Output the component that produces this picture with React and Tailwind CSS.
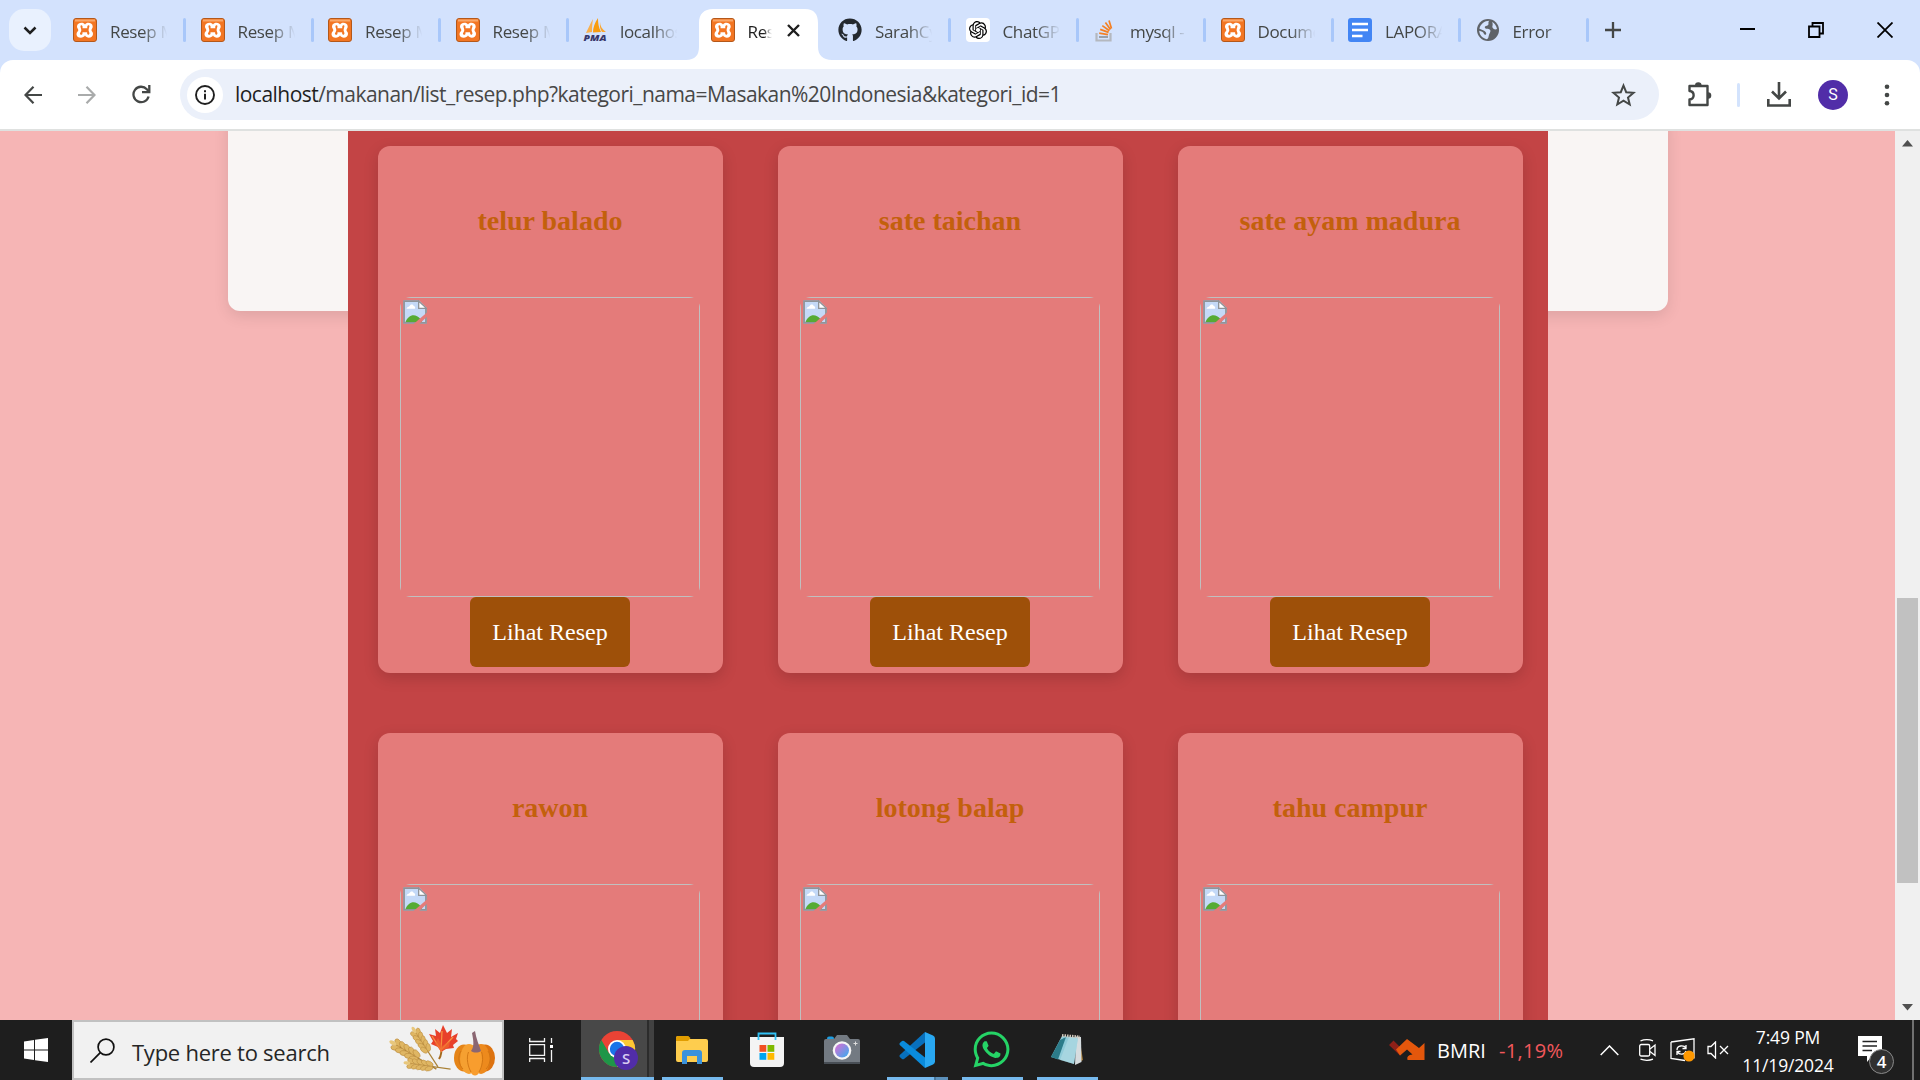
import React from "react";
import { FaGithub, FaWhatsapp } from "react-icons/fa";
import { SiOpenai } from "react-icons/si";

const XamppIcon = () => (
  <svg width="24" height="24" viewBox="0 0 24 24">
    <rect x="0.5" y="0.5" width="23" height="23" rx="2.5" fill="#f37623" stroke="#b4581a" />
    <rect x="2" y="1.5" width="20" height="2" fill="#f9a86a" />
    <path
      d="M12 6.400C10.500 3.800 4 4.200 4 8.600C4 10.600 5.300 11 5.300 12.200C5.300 13.400 3.500 13.800 3.500 16.200C3.500 20.400 10.200 20.800 12 17.600C13.800 20.800 20 20.200 20 16C20 13.600 18.500 13.400 18.500 12.200C18.500 11 19.700 10.600 19.700 8.600C19.700 4.200 13.500 3.800 12 6.400Z"
      fill="#fff"
    />
    <path
      d="M8.200 7.200C9.600 7.200 9.800 8.600 9.500 10.200H14.300C14 8.400 14.500 7 15.700 7.200C17.300 7.600 15.800 9.600 15.600 12C15.600 13.800 17.400 15.400 15.900 16.500C14.600 17.200 14 16 14.100 14.200H9.500C9.800 16.200 8.800 17.200 7.500 16.600C6 15.600 8.300 13.800 8.300 12.200C8.300 10 6.500 8 8.200 7.200Z"
      fill="#f37623"
    />
  </svg>
);

const PmaIcon = () => (
  <svg width="25" height="24" viewBox="0 0 25 24">
    <path d="M10 1C7 6 5 11 3 15L9 14C9 9 9.300 5 10 1Z" fill="#f9b04c" />
    <path d="M15 0C11.500 5 10 10 10 14.500L18 14C15.500 9 15 5 15 0Z" fill="#f89c0e" />
    <path d="M17 4C17 8 19 11 23 14L19 14C17 11 16.600 8 17 4Z" fill="#f9a630" />
    <text x="0.500" y="23" textLength="23" lengthAdjust="spacingAndGlyphs" fontSize="9.500" fontWeight="800" fontStyle="italic" fontFamily="Open Sans, sans-serif" fill="#38386a">PMA</text>
  </svg>
);

const StackIcon = () => (
  <svg width="24" height="24" viewBox="0 0 24 24" fill="none">
    <path d="M3.500 15V22.500H17.500V15" stroke="#b4b8bf" strokeWidth="2.200" />
    <path d="M6 19H15" stroke="#9aa0a8" strokeWidth="2" />
    <path d="M6.200 15.200L15 16.600M7.200 11.400L15.600 14.400M9.300 7.600L16.400 12.700M12.400 4.500L17.500 11.500M16 2.500L18.500 10.500" stroke="#f48024" strokeWidth="1.700" />
  </svg>
);

const DocsIcon = () => (
  <svg width="24" height="24" viewBox="0 0 24 24">
    <rect width="24" height="24" rx="3" fill="#4285f4" />
    <path d="M4 6H20M4 12H20M4 18H14.500" stroke="#fff" strokeWidth="2.700" />
  </svg>
);

const GlobeIcon = () => (
  <svg width="24" height="24" viewBox="0 0 24 24">
    <circle cx="12" cy="12" r="11" fill="#5f6368" />
    <path d="M13 2.500C11 4 13 5.500 11.500 7C10 8 8 7.500 8.500 9.500C9 11 12 10 13.500 11.500C15 13 13 15 12.500 17C12 19 12 20 10.500 21C6 20 3 16.500 2.800 12.500C5 13 7 13.500 7.500 15.500C8 17 10 17 9.800 15C9.600 13 6.500 12 3 10.500C4 6 8 2.500 13 2.500Z" fill="#d3e2fd" transform="translate(.4 .3)" />
    <path d="M16 4C18.500 5 20.500 8 21 11C19.500 12 17.500 11.500 16.500 9.500C16 8 17.500 6.500 16 4Z" fill="#d3e2fd" />
  </svg>
);

const GptIcon = () => (
  <span className="flex h-6 w-6 items-center justify-center rounded bg-white text-black">
    <SiOpenai size={18} />
  </span>
);

const tabs = [
  { icon: <XamppIcon />, label: "Resep M", sep: true },
  { icon: <XamppIcon />, label: "Resep M", sep: true },
  { icon: <XamppIcon />, label: "Resep M", sep: true },
  { icon: <XamppIcon />, label: "Resep M", sep: true },
  { icon: <PmaIcon />, label: "localhos", sep: false },
  { icon: <XamppIcon />, label: "Resep", active: true },
  { icon: <FaGithub size={24} color="#24292f" />, label: "SarahCy", sep: true },
  { icon: <GptIcon />, label: "ChatGPT", sep: true },
  { icon: <StackIcon />, label: "mysql - ", sep: true },
  { icon: <XamppIcon />, label: "Docume", sep: true },
  { icon: <DocsIcon />, label: "LAPORA", sep: true },
  { icon: <GlobeIcon />, label: "Error", sep: true },
];

const fadeLong = "w-[59px] [mask-image:linear-gradient(to_right,black_55%,transparent_97%)]";
const fadeShort = "w-[24px] [mask-image:linear-gradient(to_right,black_65%,transparent_100%)]";

function Tab({ tab }) {
  return (
    <div className="relative flex h-[60px] w-[127.5px] shrink-0 items-center">
      {tab.active && (
        <svg className="absolute top-[9px] -left-[25px]" width="146" height="51" viewBox="0 0 146 51">
          <path d="M0 51C9 51 13 46 13 38V14C13 5 18 0 27 0H119C128 0 132 5 132 14V38C132 46 137 51 146 51Z" fill="#fff" />
        </svg>
      )}
      <span className="relative flex w-[37px] shrink-0">{tab.icon}</span>
      <span className={`relative mt-[3px] overflow-hidden text-[17px] tracking-[-0.35px] whitespace-pre ${tab.active ? "text-[#1f1f1f]" : "text-[#444746]"} ${tab.active ? fadeShort : fadeLong}`}>
        {tab.label}
      </span>
      {tab.active && (
        <svg className="relative ml-[15px]" width="13" height="13" viewBox="0 0 13 13">
          <path d="M1 1L12 12M12 1L1 12" stroke="#1f1f1f" strokeWidth="2.400" />
        </svg>
      )}
      {tab.sep && <span className="ml-[14px] h-6 w-[3px] rounded-full bg-[#a8c7fa]" />}
    </div>
  );
}

function TabStrip() {
  return (
    <div className="flex h-[60px] items-center bg-[#d3e2fd] pl-[9px]">
      <div className="mr-[22px] flex h-[42px] w-[42px] shrink-0 items-center justify-center rounded-[15px] bg-[#e9f1fe]">
        <svg width="14" height="9" viewBox="0 0 14 9" fill="none">
          <path d="M1.500 1.500L7 7L12.500 1.500" stroke="#1f1f1f" strokeWidth="2.500" />
        </svg>
      </div>
      {tabs.map((t, i) => (
        <Tab key={i} tab={t} />
      ))}
      <svg className="ml-[2px] shrink-0" width="16" height="16" viewBox="0 0 16 16">
        <path d="M8 0V16M0 8H16" stroke="#444746" strokeWidth="2.300" />
      </svg>
      <div className="ml-auto flex items-center gap-[53px] pr-[27px]">
        <svg width="16" height="16" viewBox="0 0 16 16"><path d="M1 7H16" stroke="#000" strokeWidth="2" /></svg>
        <svg width="16" height="16" viewBox="0 0 16 16" fill="none" stroke="#000" strokeWidth="1.800">
          <path d="M1 4.500H11.500V15H1ZM4.500 4.500V1H15V11.500H11.500" />
        </svg>
        <svg width="16" height="16" viewBox="0 0 16 16"><path d="M0.500 0.500L15.500 15.500M15.500 0.500L0.500 15.500" stroke="#000" strokeWidth="1.800" /></svg>
      </div>
    </div>
  );
}

function Toolbar() {
  return (
    <div className="bg-[#d3e2fd]">
      <div className="flex h-[69px] items-center rounded-t-[13px] bg-white pl-6">
        <svg className="mr-9" width="18" height="18" viewBox="0 0 18 18" fill="none" stroke="#444746" strokeWidth="2.200">
          <path d="M18 9H1.500M9.500 0.800L1.500 9L9.500 17.200" />
        </svg>
        <svg className="mr-9" width="18" height="18" viewBox="0 0 18 18" fill="none" stroke="#a9abab" strokeWidth="2.200">
          <path d="M0 9H16.500M8.500 0.800L16.500 9L8.500 17.200" />
        </svg>
        <svg className="mr-[29px]" width="19" height="19" viewBox="0 0 19 19" fill="none" stroke="#444746" strokeWidth="2.300">
          <path d="M16.600 11.500A7.700 7.700 0 1 1 14.800 4.200L17 6.500" />
          <path d="M17.300 0V7.200H10" />
        </svg>
        <div className="flex h-[51px] w-[1479px] items-center rounded-full bg-[#ebf0fa] pr-[23px] pl-[7px]">
          <div className="flex h-9 w-9 items-center justify-center rounded-full bg-white">
            <svg width="20" height="20" viewBox="0 0 20 20" fill="none">
              <circle cx="10" cy="10" r="9" stroke="#1f1f1f" strokeWidth="1.900" />
              <path d="M10 8.700V14.500M10 5.200V7.200" stroke="#1f1f1f" strokeWidth="2" />
            </svg>
          </div>
          <span className="ml-[12px] text-[21px] tracking-[-0.53px] text-[#474747]">
            <span className="text-[#1f1f1f]">localhost</span>/makanan/list_resep.php?kategori_nama=Masakan%20Indonesia&amp;kategori_id=1
          </span>
          <svg className="ml-auto" width="25" height="24" viewBox="0 0 25 24" fill="none">
            <path d="M12.500 2.500L15.200 9.200L22.600 9.800L17 14.500L18.700 21.500L12.500 17.700L6.300 21.500L8 14.500L2.400 9.800L9.800 9.200Z" stroke="#444746" strokeWidth="2" />
          </svg>
        </div>
        <svg className="ml-[27px]" width="26" height="27" viewBox="0 0 26 27" fill="none">
          <path d="M3.500 5H21.500V24H3.500V18.500C9 18 9 10.500 3.500 10Z" stroke="#444746" strokeWidth="2.400" strokeLinejoin="round" />
          <path d="M9 4.500A3.300 3.300 0 0 1 15.600 4.500ZM22 11.200A3.300 3.300 0 0 1 22 17.800Z" fill="#444746" />
        </svg>
        <span className="ml-[25px] h-6 w-[3px] rounded-full bg-[#d3e3fd]" />
        <svg className="ml-[27px]" width="24" height="25" viewBox="0 0 24 25" fill="none" stroke="#444746" strokeWidth="2.600">
          <path d="M12 0V16M5 9.500L12 16.500L19 9.500M1.300 17V23.500H22.700V17" />
        </svg>
        <span className="ml-[27px] flex h-[30px] w-[30px] items-center justify-center rounded-full bg-[#512da8] font-[Roboto,sans-serif] text-[16px] text-white">S</span>
        <svg className="ml-9" width="6" height="22" viewBox="0 0 6 22" fill="#444746">
          <circle cx="3" cy="2.700" r="2.300" /><circle cx="3" cy="11" r="2.300" /><circle cx="3" cy="19.300" r="2.300" />
        </svg>
      </div>
      <div className="h-[2px] bg-[#dfe1e0]" />
    </div>
  );
}

const BrokenImage = () => (
  <svg className="mt-[2px] ml-[2px]" width="24" height="24" viewBox="0 0 23 23">
    <path d="M0.500 0.500H15.500L22.500 7.500V22.500H0.500Z" fill="#c4d9f7" />
    <path d="M3.500 8.500C3.500 6.500 6 6.500 6.500 5.500C7.500 3.500 10 4 10.300 5.800C12 6 12 8.500 11 8.500Z" fill="#fff" />
    <path d="M2 22C5 13.500 12 12.500 16.500 18L19 22Z" fill="#56ab34" />
    <path d="M15 1V8H22.500Z" fill="#fff" stroke="#8f9499" strokeWidth="1.300" />
    <path d="M15.500 1H1V22H22V8" fill="none" stroke="#8f9499" strokeWidth="1.700" />
    <path d="M9.500 23.500L23.500 11.500V15.500L15 23.500Z" fill="#e47b7a" />
  </svg>
);

const recipes = ["telur balado", "sate taichan", "sate ayam madura", "rawon", "lotong balap", "tahu campur"];

function RecipeCard({ name }) {
  return (
    <article className="flex h-[527px] w-[345px] flex-col items-center rounded-[12px] bg-[#e47b7a] pr-[1px] shadow-[0_5px_15px_rgba(0,0,0,0.15)]">
      <h3 className="flex h-[151px] items-center pb-[2px] font-['Liberation_Serif',serif] text-[28px] leading-none font-bold text-[#c3600c]">{name}</h3>
      <div className="h-[300px] w-[300px] shrink-0 overflow-hidden rounded-[11px]">
        <div className="h-full w-full border border-[#c0c0c0]"><BrokenImage /></div>
      </div>
      <a className="flex h-[70px] w-[160px] shrink-0 items-center justify-center rounded-[6px] bg-[#9e5009] font-['Liberation_Serif',serif] text-[24px] text-white">
        Lihat Resep
      </a>
    </article>
  );
}

function Page() {
  return (
    <div className="flex h-[889px] overflow-hidden">
      <main className="relative h-full w-[1895px] overflow-hidden bg-[#f6b5b5] pl-[348px]">
        <div className="absolute -top-5 left-[228px] h-[200px] w-[1440px] rounded-[12px] bg-[#f9f5f4] shadow-[0_5px_15px_rgba(0,0,0,0.1)]" />
        <section className="relative grid h-[1200px] w-[1200px] grid-cols-[repeat(3,345px)] content-start gap-x-[55px] gap-y-[60px] bg-[#c34445] pt-[15px] pl-[30px]">
          {recipes.map((r) => (
            <RecipeCard key={r} name={r} />
          ))}
        </section>
      </main>
      <div className="flex h-full w-[25px] flex-col items-center bg-[#f0f0f0] py-[9px]">
        <svg className="shrink-0" width="11" height="7" viewBox="0 0 11 7"><path d="M5.500 0L11 6.500H0Z" fill="#505050" /></svg>
        <div className="mt-[451px] h-[285px] w-[21px] shrink-0 bg-[#c1c1c1]" />
        <svg className="mt-auto shrink-0" width="11" height="7" viewBox="0 0 11 7"><path d="M5.500 6.500L11 0H0Z" fill="#505050" /></svg>
      </div>
    </div>
  );
}

const grains = [0, 1, 2, 3, 4];
const WheatEar = ({ transform }) => (
  <g transform={transform}>
    <path d="M0 0L44 0" stroke="#a98136" strokeWidth="1.200" />
    {grains.map((g) => (
      <g key={g} fill="#dfb663" stroke="#b98a3c" strokeWidth="0.500">
        <ellipse cx={4 + g * 4.6} cy="-2.500" rx="4" ry="2.200" transform={`rotate(24 ${4 + g * 4.6} -2.500)`} />
        <ellipse cx={4 + g * 4.6} cy="2.500" rx="4" ry="2.200" transform={`rotate(-24 ${4 + g * 4.6} 2.500)`} />
      </g>
    ))}
    <ellipse cx="0" cy="0" rx="3.500" ry="1.700" fill="#e8c77c" />
  </g>
);

const HarvestArt = () => (
  <svg width="108" height="52" viewBox="0 0 108 52">
    <WheatEar transform="translate(25 6) rotate(57)" />
    <WheatEar transform="translate(4 19) rotate(31) scale(1.150)" />
    <WheatEar transform="translate(18 39) rotate(8)" />
    <path d="M52 22C53 28 52 32 50 35" stroke="#a4691d" strokeWidth="2" fill="none" />
    <path d="M54 1L58 9L63 5L62 13L69 9L67 15L69 17L64 21L65 24L57 25L52 28L49 23L42 20L44 17L40 10L47 12L46 5L51 9Z" fill="#e8402a" />
    <path d="M52 28L53 7M52 26L64 13M52 26L43 12" stroke="#f79040" strokeWidth="1.300" />
    <path d="M52 27L46 20L49 14L53 22L61 17L60 23Z" fill="#f06a2d" opacity="0.700" />
    <ellipse cx="75" cy="34" rx="10" ry="13.500" fill="#e58417" />
    <ellipse cx="96" cy="34" rx="10" ry="13.500" fill="#dd7310" />
    <ellipse cx="80" cy="35" rx="9" ry="15" fill="#f5a031" />
    <ellipse cx="92" cy="35" rx="9" ry="15" fill="#ed8a1d" />
    <ellipse cx="86" cy="36" rx="7" ry="15.500" fill="#f89d2e" />
    <path d="M79.500 28C77 34 79 43 82 48M92.500 28C95 34 93 43 90 48M72 27C68 33 70 41 74 45M99 27C103 33 101 41 97 45" stroke="#cf7412" strokeWidth="0.900" fill="none" />
    <path d="M82 27C86 22 84 15 83 9L86 7C87 14 90 21 92 27C89 29 85 29 82 27Z" fill="#8a6672" />
  </svg>
);

const ChromeIcon = () => (
  <svg width="40" height="40" viewBox="0 0 40 40">
    <circle cx="18" cy="18" r="18" fill="#ea4335" />
    <path d="M2.400 9A18 18 0 0 0 18 36L25.800 22.500L18 18L10.200 22.500Z" fill="#1e9648" />
    <path d="M33.600 9A18 18 0 0 1 18 36L25.800 22.500L18 9Z" fill="#fcc934" />
    <circle cx="18" cy="18" r="9" fill="#fff" />
    <circle cx="18" cy="18" r="7.200" fill="#1a73e8" />
    <circle cx="27" cy="27" r="12" fill="#512da8" />
    <text x="27" y="32.500" textAnchor="middle" fontSize="15" fontWeight="600" fontFamily="Open Sans, sans-serif" fill="#d9cdf2">S</text>
  </svg>
);

const ExplorerIcon = () => (
  <svg width="32" height="32" viewBox="0 0 32 32">
    <path d="M0 4Q0 2 2 2H12L14 5H30Q32 5 32 7V26Q32 28 30 28H2Q0 28 0 26Z" fill="#fecd4e" />
    <path d="M0 7V4Q0 2 2 2H12L14.500 4L12 7Z" fill="#e19d00" />
    <path d="M6 30V19Q6 16 9 16H23Q26 16 26 19V30H21V22H11V30Z" fill="#3a92dc" />
  </svg>
);

const StoreIcon = () => (
  <svg width="36" height="36" viewBox="0 0 36 36" fill="none">
    <path d="M1 5H35V31Q35 35 31 35H5Q1 35 1 31Z" fill="#f4f4f4" />
    <path d="M9.500 8V1.500H26.500V8" stroke="#31c1f5" strokeWidth="1.800" />
    <path d="M10.500 13H17.300V19.800H10.500Z" fill="#f25022" /><path d="M18.500 13H25.300V19.800H18.500Z" fill="#7fba00" />
    <path d="M10.500 21H17.300V27.800H10.500Z" fill="#00a4ef" /><path d="M18.500 21H25.300V27.800H18.500Z" fill="#ffb900" />
  </svg>
);

const CameraIcon = () => (
  <svg width="36" height="36" viewBox="0 0 36 36">
    <defs>
      <linearGradient id="lens" x1="0" y1="0" x2="1" y2="1"><stop offset="0.200" stopColor="#c078d8" /><stop offset="1" stopColor="#32aef0" /></linearGradient>
    </defs>
    <rect x="3" y="4.500" width="7" height="5" rx="2" fill="#1e9de0" />
    <path d="M0 9Q0 7 2 7H10L13 3H23L26 7H34Q36 7 36 9V32H0Z" fill="#737a82" />
    <path d="M0 30H36V32H0Z" fill="#484e55" />
    <circle cx="18" cy="18.500" r="9.300" fill="#f6f6f6" />
    <circle cx="18" cy="18.500" r="7" fill="url(#lens)" />
    <path d="M31.500 9.500V13.500M29.500 11.500H33.500" stroke="#ddd" strokeWidth="1" />
  </svg>
);

const CodeIcon = () => (
  <svg width="36" height="36" viewBox="0 0 36 36">
    <path d="M26 0L0.800 23Q0 24 0.800 25L3 27Q4 27.500 5 27L26 10.500Z" fill="#0870bd" />
    <path d="M26 36L0.800 13Q0 12 0.800 11L3 9Q4 8.500 5 9L26 25.500Z" fill="#0a8bdc" />
    <path d="M26 0L34 3.500Q36 4.500 36 6.500V29.500Q36 31.500 34 32.500L26 36Z" fill="#29a8f2" />
  </svg>
);

const NotepadIcon = () => (
  <svg width="34" height="34" viewBox="0 0 34 34">
    <path d="M29 3L33 27L29 29Z" fill="#a77a34" />
    <path d="M26 3.500L31 4L31.500 29L25 32Z" fill="#d6dcdf" />
    <path d="M12 3L28 4.500L24 31L1 24Z" fill="#8fcbd9" />
    <path d="M10 7L1 24L8 26.500L16 4Z" fill="#2c7c8a" />
    <path d="M19 4L28 4.500L24 31L10 27Z" fill="#bde0e8" opacity="0.500" />
    <path d="M12 2.500L30 4" stroke="#d0c8bc" strokeWidth="3" strokeDasharray="1.500 1" />
  </svg>
);

const apps = [
  { icon: <ExplorerIcon />, open: true },
  { icon: <StoreIcon /> },
  { icon: <CameraIcon /> },
  { icon: <CodeIcon />, open: true, stacked: true },
  { icon: <FaWhatsapp size={41} color="#25d366" />, open: true },
  { icon: <NotepadIcon />, open: true },
];

function Taskbar() {
  return (
    <footer className="flex h-[60px] items-center bg-[#1e1e1e] text-white">
      <div className="flex w-[72px] justify-center">
        <svg width="24" height="24" viewBox="0 0 24 24" fill="#fff">
          <path d="M0 3.400L10 2V11.400H0ZM11 1.800L24 0V11.400H11ZM0 12.500H10V22L0 20.600ZM11 12.500H24V24L11 22.200Z" />
        </svg>
      </div>
      <div className="flex h-[60px] w-[432px] items-center border-2 border-[#c1c1c1] bg-[#f1f1f1] pr-[5px] pl-4">
        <svg width="25" height="25" viewBox="0 0 25 25" fill="none" stroke="#111" strokeWidth="1.700">
          <circle cx="16" cy="9" r="7.900" /><path d="M10.300 14.700L0.500 24.500" />
        </svg>
        <span className="mt-1 ml-[17px] text-[22px] tracking-[-0.25px] whitespace-nowrap text-[#262626]">Type here to search</span>
        <span className="ml-auto"><HarvestArt /></span>
      </div>
      <div className="flex w-[77px] justify-center pr-[3px]">
        <svg width="25" height="24" viewBox="0 0 25 24" fill="none" stroke="#f4f4f4" strokeWidth="1.300">
          <path d="M0.700 0V3.500H15.500V0M0.700 24V20.500H15.500V24M0.700 6.700H15.500V17.300H0.700ZM22.500 0V5M22.500 12V24" />
          <path d="M21 7H24V10H21Z" fill="#fff" stroke="none" />
        </svg>
      </div>
      <div className="flex h-full w-[73px] flex-col border-b-[3px] border-[#76b9ed] bg-[#484848]">
        <div className="flex h-full">
          <div className="flex w-[66px] items-center justify-end pt-[5px] pr-[8px]"><ChromeIcon /></div>
          <div className="h-full w-[7px] border-l-2 border-[#2c2c2c] bg-[#414141]" />
        </div>
      </div>
      {apps.map((a, i) => (
        <div key={i} className="flex h-full w-[75px] flex-col items-center">
          <div className="flex flex-1 items-center pt-[2px]">{a.icon}</div>
          <div className={a.open ? "ml-[2px] flex h-[3px] w-[61px] justify-end bg-[#76b9ed]" : "h-[3px] w-[61px]"}>
            {a.stacked && <span className="w-[14px] border-l-2 border-[#49779b] bg-[#5c90ba]" />}
          </div>
        </div>
      ))}
      <div className="ml-auto flex h-full items-center">
        <svg width="36" height="22" viewBox="0 0 36 22">
          <path d="M0 6L4.500 1.500L11 8L16 3L20.500 7.500L11 16.500Z" fill="#8f2018" />
          <path d="M7 10.500L18 0L30 9L35.500 4V21H18.500Q17 16 23.500 15.500L18 10.500L11 16.500Z" fill="#e4570c" />
        </svg>
        <span className="mt-[2px] ml-[12px] w-[62px] text-[20px] tracking-[0px]">BMRI</span>
        <span className="mt-[2px] w-[100px] text-[20px] tracking-[0.3px] text-[#f1585c]">-1,19%</span>
        <svg className="ml-[1px]" width="19" height="11" viewBox="0 0 19 11" fill="none"><path d="M0.700 10L9.500 1L18.300 10" stroke="#fff" strokeWidth="1.500" /></svg>
        <svg className="ml-5" width="17" height="22" viewBox="0 0 17 22" fill="none" stroke="#fff" strokeWidth="1.300">
          <rect x="0.700" y="5.500" width="10" height="11.500" rx="1.500" /><path d="M11 10L16 6V16.500L11 12.500M1.500 1.800Q8 -0.500 14 1.800M1.500 20.200Q8 22.500 14 20.200" />
        </svg>
        <svg className="ml-[14px]" width="25" height="24" viewBox="0 0 25 24" fill="none" stroke="#fff" strokeWidth="1.300">
          <path d="M1 4L24 0.800V20.500M1 4V20.500L15 22.500M7 12C7 7 14 7 16 10M16 7V10.500H12.500M16 13C15 17 9 17 7.500 14M7 17V13.500H10.500" />
          <circle cx="19" cy="18" r="5.600" fill="#ff9800" stroke="none" />
        </svg>
        <svg className="ml-[12px]" width="22" height="18" viewBox="0 0 22 18" fill="none" stroke="#fff" strokeWidth="1.300">
          <path d="M1 5.500H4L8.500 1V17L4 12.500H1ZM13 5L21 13M21 5L13 13" />
        </svg>
        <div className="ml-[11px] flex w-[96px] flex-col items-center pt-[1px] text-[17.500px] leading-[28px] tracking-[-0.15px]">
          <span>7:49 PM</span>
          <span>11/19/2024</span>
        </div>
        <div className="relative ml-[22px] h-[44px] w-[54px]">
          <svg className="mt-2" width="24" height="29" viewBox="0 0 24 29">
            <path d="M0 0H24V20H14L9 26V20H0Z" fill="#fff" />
            <path d="M4.500 5.500H19M4.500 10H19M4.500 14.500H14" stroke="#222" strokeWidth="1.500" />
          </svg>
          <span className="absolute top-[21px] left-[11px] flex h-[25px] w-[25px] items-center justify-center rounded-full border border-[#8a8a8a] bg-[#303030] text-[17px] font-semibold">4</span>
        </div>
        <div className="mr-[6px] h-full w-[2px] bg-[#717171]" />
      </div>
    </footer>
  );
}

export default function App() {
  return (
    <div className="h-[1080px] w-[1920px] overflow-hidden font-['Open_Sans','Noto_Sans',sans-serif]">
      <TabStrip />
      <Toolbar />
      <Page />
      <Taskbar />
    </div>
  );
}
